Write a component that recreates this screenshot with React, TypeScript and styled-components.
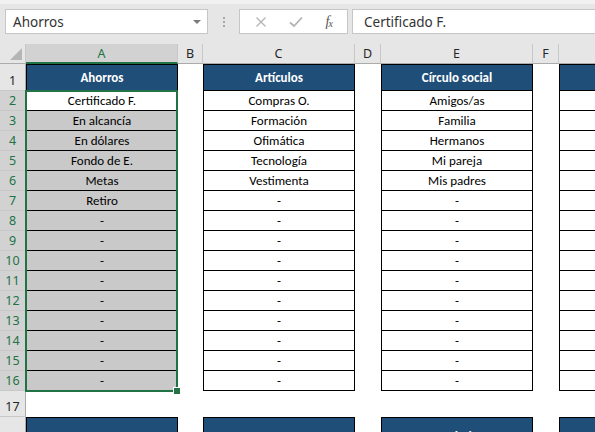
import React from 'react';
import styled, { createGlobalStyle } from 'styled-components';

const GREEN = '#217346';
const NAVY = '#1f4e78';
const CELL_FONT = "Carlito, Lato, 'Liberation Sans', sans-serif";
const UI_FONT = "'Noto Sans', 'Open Sans', sans-serif";

type Col = { key: string; width: number; table: boolean };

const cols: Col[] = [
    { key: 'A', width: 152, table: true },
    { key: 'B', width: 25, table: false },
    { key: 'C', width: 152, table: true },
    { key: 'D', width: 26, table: false },
    { key: 'E', width: 152, table: true },
    { key: 'F', width: 26, table: false },
    { key: 'G', width: 152, table: true },
];

const dash = (n: number) => Array.from({ length: n }, () => '-');

const tables: Record<string, { title: string; items: string[]; next: string }> = {
    A: {
        title: 'Ahorros',
        items: ['Certificado F.', 'En alcancía', 'En dólares', 'Fondo de E.', 'Metas', 'Retiro', ...dash(9)],
        next: '',
    },
    C: {
        title: 'Artículos',
        items: ['Compras O.', 'Formación', 'Ofimática', 'Tecnología', 'Vestimenta', ...dash(10)],
        next: '',
    },
    E: {
        title: 'Círculo social',
        items: ['Amigos/as', 'Familia', 'Hermanos', 'Mi pareja', 'Mis padres', ...dash(10)],
        next: 'Salud',
    },
    G: { title: '', items: Array.from({ length: 15 }, () => ''), next: '' },
};

const GlobalStyle = createGlobalStyle`
    html, body { margin: 0; padding: 0; background: #fff; }
    body { overflow: hidden; }
`;

const Window = styled.div`
    position: relative;
    width: 595px;
    height: 432px;
    overflow: hidden;
    background: #fff;
`;

const FormulaBar = styled.div`
    height: 44px;
    box-sizing: border-box;
    background: #e6e6e6;
    border-top: 4px solid #f1f1f1;
    padding: 5px 0 0 5px;
    display: flex;
    align-items: flex-start;
`;

const Box = styled.div`
    height: 25px;
    box-sizing: border-box;
    background: #fff;
    border: 1px solid #c6c6c6;
    display: flex;
    align-items: center;
    font-family: ${UI_FONT};
    font-size: 13.5px;
    color: #333;
`;

const NameBox = styled(Box)`
    width: 203px;
    padding: 0 6px 0 7px;
    justify-content: space-between;
`;

const Arrow = styled.span`
    width: 0;
    height: 0;
    border-left: 4px solid transparent;
    border-right: 4px solid transparent;
    border-top: 4px solid #7a7a7a;
`;

const Grip = styled.div`
    width: 31px;
    height: 25px;
    display: flex;
    flex-direction: column;
    align-items: center;
    justify-content: center;
    gap: 2px;
`;

const GripDot = styled.span`
    width: 2px;
    height: 2px;
    background: #a8a8a8;
`;

const ActionBox = styled(Box)`
    width: 109px;
    justify-content: space-around;
    padding: 0 4px;
`;

const Fx = styled.span`
    font-family: 'Liberation Serif', serif;
    font-style: italic;
    font-size: 14px;
    color: #555;
    letter-spacing: -1px;
    sub {
        font-size: 10px;
        vertical-align: -1px;
    }
`;

const FormulaInput = styled(Box)`
    flex: 1;
    margin-left: 4px;
    padding-left: 11px;
    border-right: none;
`;

const Sheet = styled.div`
    position: relative;
`;

const Row = styled.div<{ $h: number }>`
    display: flex;
    height: ${p => p.$h}px;
`;

const Corner = styled.div`
    position: relative;
    width: 26px;
    flex: none;
    box-sizing: border-box;
    background: #e6e6e6;
    border-right: 1px solid #c8c8c8;
    border-bottom: 1px solid #ababab;
    &::after {
        content: '';
        position: absolute;
        right: 3px;
        bottom: 3px;
        border-left: 12px solid transparent;
        border-bottom: 12px solid #b5b5b5;
    }
`;

const ColHead = styled.div<{ $w: number; $sel?: boolean; $grow?: boolean }>`
    width: ${p => p.$w}px;
    flex: ${p => (p.$grow ? '1 0 auto' : 'none')};
    box-sizing: border-box;
    display: flex;
    align-items: center;
    justify-content: center;
    background: ${p => (p.$sel ? '#d2d2d2' : '#e6e6e6')};
    color: ${p => (p.$sel ? GREEN : '#262626')};
    border-right: 1px solid #c8c8c8;
    border-bottom: ${p => (p.$sel ? `2px solid ${GREEN}` : '1px solid #ababab')};
    font-family: ${UI_FONT};
    font-size: 12.5px;
    padding-top: ${p => (p.$sel ? 1 : 0)}px;
`;

const RowHead = styled.div<{ $sel?: boolean; $tall?: boolean }>`
    width: 26px;
    flex: none;
    box-sizing: border-box;
    display: flex;
    justify-content: center;
    align-items: ${p => (p.$tall ? 'flex-end' : 'center')};
    padding-bottom: ${p => (p.$tall ? 1 : 0)}px;
    background: ${p => (p.$sel ? '#d2d2d2' : '#e6e6e6')};
    color: ${p => (p.$sel ? GREEN : '#262626')};
    border-right: 1px solid #ababab;
    border-bottom: 1px solid #c8c8c8;
    font-family: ${UI_FONT};
    font-size: 12.5px;
`;

type Kind = 'head' | 'fill' | 'plain' | 'blank';

const Cell = styled.div<{ $w: number; $kind: Kind; $grow?: boolean }>`
    width: ${p => p.$w}px;
    flex: ${p => (p.$grow ? '1 0 auto' : 'none')};
    box-sizing: border-box;
    display: flex;
    align-items: center;
    justify-content: center;
    white-space: nowrap;
    overflow: hidden;
    font-family: ${CELL_FONT};
    font-size: 13px;
    color: ${p => (p.$kind === 'head' ? '#fff' : '#000')};
    font-weight: ${p => (p.$kind === 'head' ? 700 : 400)};
    background: ${p => (p.$kind === 'head' ? NAVY : p.$kind === 'fill' ? '#c9c9c9' : '#fff')};
    border: ${p => (p.$kind === 'blank' ? 'none' : '1px solid #000')};
    border-top: ${p => (p.$kind === 'head' ? '1px solid #000' : 'none')};
    ${p => p.$grow && p.$kind !== 'blank' && 'border-right: none;'}
`;

const NextHead = styled(Cell)`
    align-items: flex-start;
    padding-top: 11px;
`;

const Selection = styled.div`
    position: absolute;
    left: 25px;
    top: 46px;
    width: 153px;
    height: 302px;
    box-sizing: border-box;
    border: 2px solid ${GREEN};
    pointer-events: none;
`;

const FillHandle = styled.span`
    position: absolute;
    right: -5px;
    bottom: -5px;
    width: 6px;
    height: 6px;
    background: ${GREEN};
    border: 1px solid #fff;
`;

const XIcon = () => (
    <svg width="12" height="12" viewBox="0 0 12 12">
        <path d="M1.5 1.5 L10.5 10.5 M10.5 1.5 L1.5 10.5" stroke="#b3b3b3" strokeWidth="1.3" fill="none" />
    </svg>
);

const CheckIcon = () => (
    <svg width="14" height="12" viewBox="0 0 14 12">
        <path d="M1 6.5 L5 10 L13 1.5" stroke="#b3b3b3" strokeWidth="1.8" fill="none" />
    </svg>
);

const last = cols.length - 1;

const App = () => {
    const dataRows = Array.from({ length: 15 }, (_, i) => i);

    return (
        <Window>
            <GlobalStyle />
            <FormulaBar>
                <NameBox>
                    Ahorros
                    <Arrow />
                </NameBox>
                <Grip>
                    <GripDot />
                    <GripDot />
                    <GripDot />
                </Grip>
                <ActionBox>
                    <XIcon />
                    <CheckIcon />
                    <Fx>
                        f<sub>x</sub>
                    </Fx>
                </ActionBox>
                <FormulaInput>Certificado F.</FormulaInput>
            </FormulaBar>

            <Sheet>
                <Row $h={20}>
                    <Corner />
                    {cols.map((c, i) => (
                        <ColHead key={c.key} $w={c.width} $sel={c.key === 'A'} $grow={i === last}>
                            {c.key}
                        </ColHead>
                    ))}
                </Row>

                <Row $h={27}>
                    <RowHead $tall>1</RowHead>
                    {cols.map((c, i) => (
                        <Cell key={c.key} $w={c.width} $kind={c.table ? 'head' : 'blank'} $grow={i === last}>
                            {c.table ? tables[c.key].title : ''}
                        </Cell>
                    ))}
                </Row>

                {dataRows.map(r => (
                    <Row $h={20} key={r}>
                        <RowHead $sel>{r + 2}</RowHead>
                        {cols.map((c, i) => {
                            let kind: Kind = 'blank';
                            if (c.table) kind = c.key === 'A' && r > 0 ? 'fill' : 'plain';
                            return (
                                <Cell key={c.key} $w={c.width} $kind={kind} $grow={i === last}>
                                    {c.table ? tables[c.key].items[r] : ''}
                                </Cell>
                            );
                        })}
                    </Row>
                ))}

                <Row $h={26}>
                    <RowHead $tall>17</RowHead>
                    {cols.map((c, i) => (
                        <Cell key={c.key} $w={c.width} $kind="blank" $grow={i === last} />
                    ))}
                </Row>

                <Row $h={40}>
                    <RowHead $tall>18</RowHead>
                    {cols.map((c, i) => (
                        <NextHead key={c.key} $w={c.width} $kind={c.table ? 'head' : 'blank'} $grow={i === last}>
                            {c.table ? tables[c.key].next : ''}
                        </NextHead>
                    ))}
                </Row>

                <Selection>
                    <FillHandle />
                </Selection>
            </Sheet>
        </Window>
    );
};

export default App;
